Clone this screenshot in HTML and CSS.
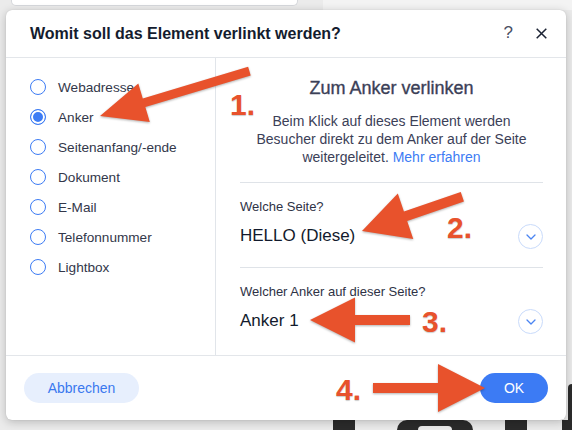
FILE: index.html
```html
<!DOCTYPE html>
<html lang="de">
<head>
<meta charset="utf-8">
<title>Womit soll das Element verlinkt werden?</title>
<link rel="stylesheet" href="styles.css">
</head>
<body>
<div class="page">
  <div class="top-strip">
    <div class="top-card"></div>
    <div class="top-gap"></div>
    <div class="top-right"></div>
  </div>
  <div class="middle">
    <div class="gutter-left"></div>
    <div class="dialog">
      <div class="dlg-header">
        <h1 class="dlg-title">Womit soll das Element verlinkt werden?</h1>
        <div class="dlg-actions">
          <span class="help">?</span>
          <svg class="close" width="11" height="11" viewBox="0 0 11 11"><path d="M0.7 0.7 L10.3 10.3 M10.3 0.7 L0.7 10.3" stroke="#1b2233" stroke-width="1.5" fill="none"/></svg>
        </div>
      </div>
      <div class="dlg-body">
        <ul class="options">
          <li class="option"><span class="radio"></span><span class="opt-label">Webadresse</span></li>
          <li class="option"><span class="radio checked"></span><span class="opt-label">Anker</span></li>
          <li class="option"><span class="radio"></span><span class="opt-label">Seitenanfang/-ende</span></li>
          <li class="option"><span class="radio"></span><span class="opt-label">Dokument</span></li>
          <li class="option"><span class="radio"></span><span class="opt-label">E-Mail</span></li>
          <li class="option"><span class="radio"></span><span class="opt-label">Telefonnummer</span></li>
          <li class="option"><span class="radio"></span><span class="opt-label">Lightbox</span></li>
        </ul>
        <div class="panel">
          <h2 class="panel-title">Zum Anker verlinken</h2>
          <p class="panel-desc">Beim Klick auf dieses Element werden<br>Besucher direkt zu dem Anker auf der Seite<br>weitergeleitet. <a class="more">Mehr erfahren</a></p>
          <div class="field">
            <div class="field-label">Welche Seite?</div>
            <div class="field-row">
              <span class="field-value">HELLO (Diese)</span>
              <span class="chev"><svg width="10" height="6" viewBox="0 0 10 6"><path d="M1 1 L5 5 L9 1" stroke="#4a84f2" stroke-width="1.3" fill="none" stroke-linecap="round" stroke-linejoin="round"/></svg></span>
            </div>
          </div>
          <div class="field">
            <div class="field-label">Welcher Anker auf dieser Seite?</div>
            <div class="field-row">
              <span class="field-value">Anker 1</span>
              <span class="chev"><svg width="10" height="6" viewBox="0 0 10 6"><path d="M1 1 L5 5 L9 1" stroke="#4a84f2" stroke-width="1.3" fill="none" stroke-linecap="round" stroke-linejoin="round"/></svg></span>
            </div>
          </div>
        </div>
      </div>
      <div class="dlg-footer">
        <button class="btn btn-secondary">Abbrechen</button>
        <button class="btn btn-primary">OK</button>
      </div>
    </div>
    <div class="gutter-right"><div class="edge-glyph"></div></div>
  </div>
  <div class="bottom-strip">
    <div></div>
    <div class="glyph"></div>
    <div></div>
    <div class="glyph ring"><div class="ring-hole"></div></div>
    <div></div>
    <div class="glyph"></div>
    <div></div>
    <div class="glyph"></div>
  </div>
</div>

<div class="annotations">
  <svg class="arrows" width="572" height="430" viewBox="0 0 572 430">
    <polygon transform="translate(100,116) rotate(-16.7)" points="0,0 46,-20 46,-4.5 156,-4.5 156,4.5 46,4.5 46,20"/>
    <polygon transform="translate(362,231) rotate(-18.8)" points="0,0 46,-24 46,-5 106,-5 106,5 46,5 46,24"/>
    <polygon transform="translate(310,320)" points="0,0 45,-22.5 45,-5 100,-5 100,5 45,5 45,22.5"/>
    <polygon transform="translate(485,388)" points="0,0 -47,-24 -47,-5 -112,-5 -112,5 -47,5 -47,24"/>
  </svg>
  <span class="num n1">1.</span>
  <span class="num n2">2.</span>
  <span class="num n3">3.</span>
  <span class="num n4">4.</span>
</div>
</body>
</html>
```

FILE: styles.css
```css
* { box-sizing: border-box; }

html, body {
  margin: 0;
  padding: 0;
}

body {
  width: 572px;
  height: 430px;
  overflow: hidden;
  position: relative;
  background: #ebebeb;
  font-family: "Liberation Sans", Arial, sans-serif;
}

.page {
  display: flex;
  flex-direction: column;
  width: 572px;
  height: 430px;
}

/* background page behind the dialog */
.top-strip {
  display: flex;
  height: 10px;
}
.top-card {
  margin-left: 11px;
  width: 287px;
  height: 6px;
  background: #ffffff;
  border: 1px solid #d6d8dc;
  border-top: none;
  border-radius: 0 0 5px 5px;
}
.top-gap {
  width: 25px;
}
.top-right {
  flex: 1;
  background: #f3f3f3;
}

.middle {
  display: flex;
  height: 410px;
}
.gutter-left {
  width: 6px;
}
.gutter-right {
  width: 6px;
  display: flex;
  flex-direction: column;
  justify-content: flex-end;
}
.edge-glyph {
  height: 36px;
  margin-left: 2px;
  background: #2c2c2c;
  border-radius: 4px 0 0 0;
}

.bottom-strip {
  display: grid;
  grid-template-columns: 333px 22px 42px 76px 32px 22px 35px 10px;
  height: 10px;
}
.glyph {
  background: #2b2b2b;
}
.ring {
  border-radius: 40px 40px 0 0;
  display: flex;
  justify-content: center;
  align-items: flex-end;
}
.ring-hole {
  width: 34px;
  height: 4px;
  background: #ebebeb;
  border-radius: 17px 17px 0 0;
}

/* dialog */
.dialog {
  width: 560px;
  height: 410px;
  background: #ffffff;
  border-radius: 6px;
  box-shadow: 0 2px 10px rgba(0, 0, 0, 0.22), 0 0 1px rgba(0, 0, 0, 0.2);
  display: flex;
  flex-direction: column;
  position: relative;
  z-index: 1;
}

.dlg-header {
  height: 48px;
  flex: none;
  display: flex;
  align-items: center;
  justify-content: space-between;
  padding: 0 19px 0 24px;
  border-bottom: 1px solid #e3e6ea;
}
.dlg-title {
  margin: 0;
  font-size: 16px;
  line-height: 18px;
  font-weight: 700;
  color: #141c2e;
}
.dlg-actions {
  display: flex;
  align-items: center;
  gap: 23px;
}
.help {
  font-size: 17px;
  line-height: 18px;
  color: #4a4f63;
  margin-top: -1px;
}
.close {
  display: block;
}

.dlg-body {
  flex: 1;
  display: flex;
  min-height: 0;
}

.options {
  list-style: none;
  margin: 0;
  padding: 14px 0 0 24px;
  width: 210px;
  flex: none;
  border-right: 1px solid #e1e5ea;
}
.option {
  height: 30px;
  display: flex;
  align-items: center;
}
.radio {
  width: 16px;
  height: 16px;
  border-radius: 50%;
  border: 1px solid #3d7cf4;
  background: #ffffff;
  flex: none;
}
.radio.checked {
  background: #3d7cf4;
  box-shadow: inset 0 0 0 2px #ffffff;
}
.opt-label {
  margin-left: 12px;
  font-size: 13.6px;
  color: #33374a;
}

.panel {
  flex: 1;
  padding: 20px 23px 0 24px;
}
.panel-title {
  margin: 0;
  text-align: center;
  font-size: 18px;
  line-height: 20px;
  font-weight: 400;
  -webkit-text-stroke: 0.35px #3b4057;
  color: #3b4057;
}
.panel-desc {
  margin: 14px 0 16px;
  text-align: center;
  font-size: 14px;
  line-height: 18px;
  color: #3b4057;
}
.more {
  color: #3d7cf4;
}

.field {
  border-top: 1px solid #dfe3e8;
  padding: 16px 0 19px;
}
.field-label {
  font-size: 13px;
  line-height: 16px;
  color: #2e3245;
  margin-bottom: 9px;
}
.field-row {
  height: 24px;
  display: flex;
  align-items: center;
  justify-content: space-between;
}
.field-value {
  font-size: 17px;
  line-height: 24px;
  color: #121a2c;
}
.chev {
  width: 25px;
  height: 25px;
  border-radius: 50%;
  border: 1.5px solid #c9dbfb;
  display: flex;
  align-items: center;
  justify-content: center;
  padding-top: 1px;
}
.chev svg {
  display: block;
}

.dlg-footer {
  flex: none;
  height: 65px;
  border-top: 1px solid #e3e6ea;
  display: flex;
  align-items: center;
  justify-content: space-between;
  padding: 0 18px;
}
.btn {
  height: 30px;
  border: none;
  border-radius: 15px;
  font-family: "Liberation Sans", Arial, sans-serif;
  font-size: 14px;
  padding: 0;
}
.btn-secondary {
  width: 115px;
  background: #e7effd;
  color: #3a78ef;
}
.btn-primary {
  width: 68px;
  background: #3c7bf4;
  color: #ffffff;
}

/* annotation overlay */
.annotations {
  position: absolute;
  left: 0;
  top: 0;
  width: 572px;
  height: 430px;
  pointer-events: none;
  z-index: 5;
}
.arrows {
  position: absolute;
  left: 0;
  top: 0;
  fill: #e8522c;
  filter: drop-shadow(0 1px 1px rgba(0, 0, 0, 0.3));
}
.num {
  position: absolute;
  font-size: 30px;
  line-height: 30px;
  font-weight: 700;
  color: #e8522c;
  text-shadow: 0 1px 1px rgba(0, 0, 0, 0.2);
}
.n1 { left: 230px; top: 90px; }
.n2 { left: 447px; top: 213px; }
.n3 { left: 422px; top: 307px; }
.n4 { left: 336px; top: 375px; }
```
